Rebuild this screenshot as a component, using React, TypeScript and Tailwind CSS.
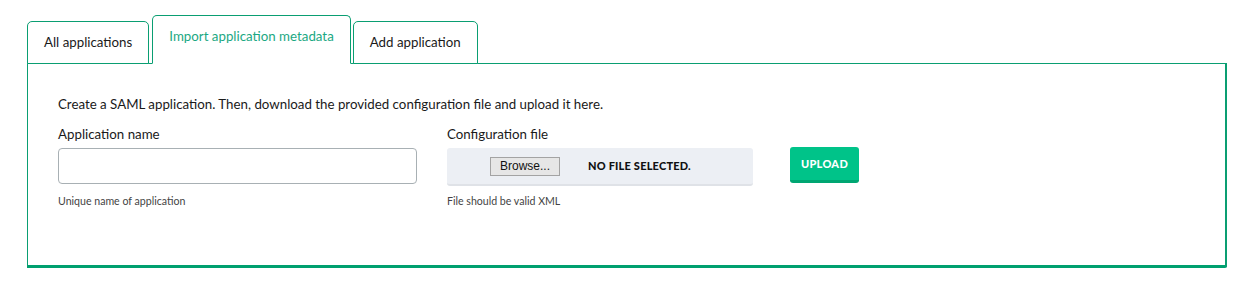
import { useState } from 'react'

const tabs = ['All applications', 'Import application metadata', 'Add application']

export default function App() {
  const [active, setActive] = useState(1)
  const [name, setName] = useState('')

  return (
    <div className="h-[283px] bg-white font-['Lato',sans-serif] text-[#1a1a1a]">
      <div className="pl-[27px] pr-[14px] pt-[15px]">
        {/* Tabs */}
        <div className="relative z-10 -mb-px flex items-end gap-[2px]">
          {tabs.map((t, i) => (
            <button
              key={t}
              onClick={() => setActive(i)}
              className={
                i === active
                  ? 'ml-px h-[49px] rounded-t-[5px] border border-b-white border-[#0a9e72] bg-white px-[16px] pb-[6px] text-[13.3px] text-[#1ba883]'
                  : 'h-[43px] rounded-t-[5px] border border-[#0a9e72] bg-white px-[16px] text-[13.3px] text-[#1a1a1a]'
              }
            >
              {t}
            </button>
          ))}
        </div>

        {/* Panel */}
        <div className="h-[205px] rounded-br-[2px] border border-r-[2px] border-b-[3px] border-[#0a9e72] border-b-[#00a06f] px-[30px] pt-[31px]">
          <p className="text-[13.3px] leading-[18px]">
            Create a SAML application. Then, download the provided configuration file and upload it here.
          </p>

          <div className="mt-[12px] flex items-start">
            <div className="w-[359px]">
              <label className="block text-[13.3px] leading-[18px]">Application name</label>
              <input
                value={name}
                onChange={(e) => setName(e.target.value)}
                className="mt-[5px] h-[36px] w-full rounded-[4px] border border-[#a8b0b4] px-2 text-[14px] outline-none"
              />
              <p className="mt-[10px] text-[10.6px] leading-[14px] text-[#444]">Unique name of application</p>
            </div>

            <div className="ml-[30px] w-[306px]">
              <label className="block text-[13.3px] leading-[18px]">Configuration file</label>
              <div className="mt-[5px] flex h-[38px] items-center rounded-[3px] border-b-[2px] border-[#dfe2e7] bg-[#eceff4] pl-[43px]">
                <span className="flex h-[19px] w-[70px] items-center justify-center border border-[#a3a3a3] bg-[#e6e6e6] font-['Liberation_Sans',sans-serif] text-[12px] text-[#111]">
                  Browse...
                </span>
                <span className="ml-[28px] text-[11px] font-black tracking-[0.2px] text-[#111]">NO FILE SELECTED.</span>
              </div>
              <p className="mt-[8px] text-[10.6px] leading-[14px] text-[#444]">File should be valid XML</p>
            </div>

            <button className="ml-[37px] mt-[22px] h-[36px] w-[69px] rounded-[3px] border-b-[3px] border-[#00a672] bg-[#00c389] pt-[2px] text-[11px] font-black tracking-[0.3px] text-white">
              UPLOAD
            </button>
          </div>
        </div>
      </div>
    </div>
  )
}
